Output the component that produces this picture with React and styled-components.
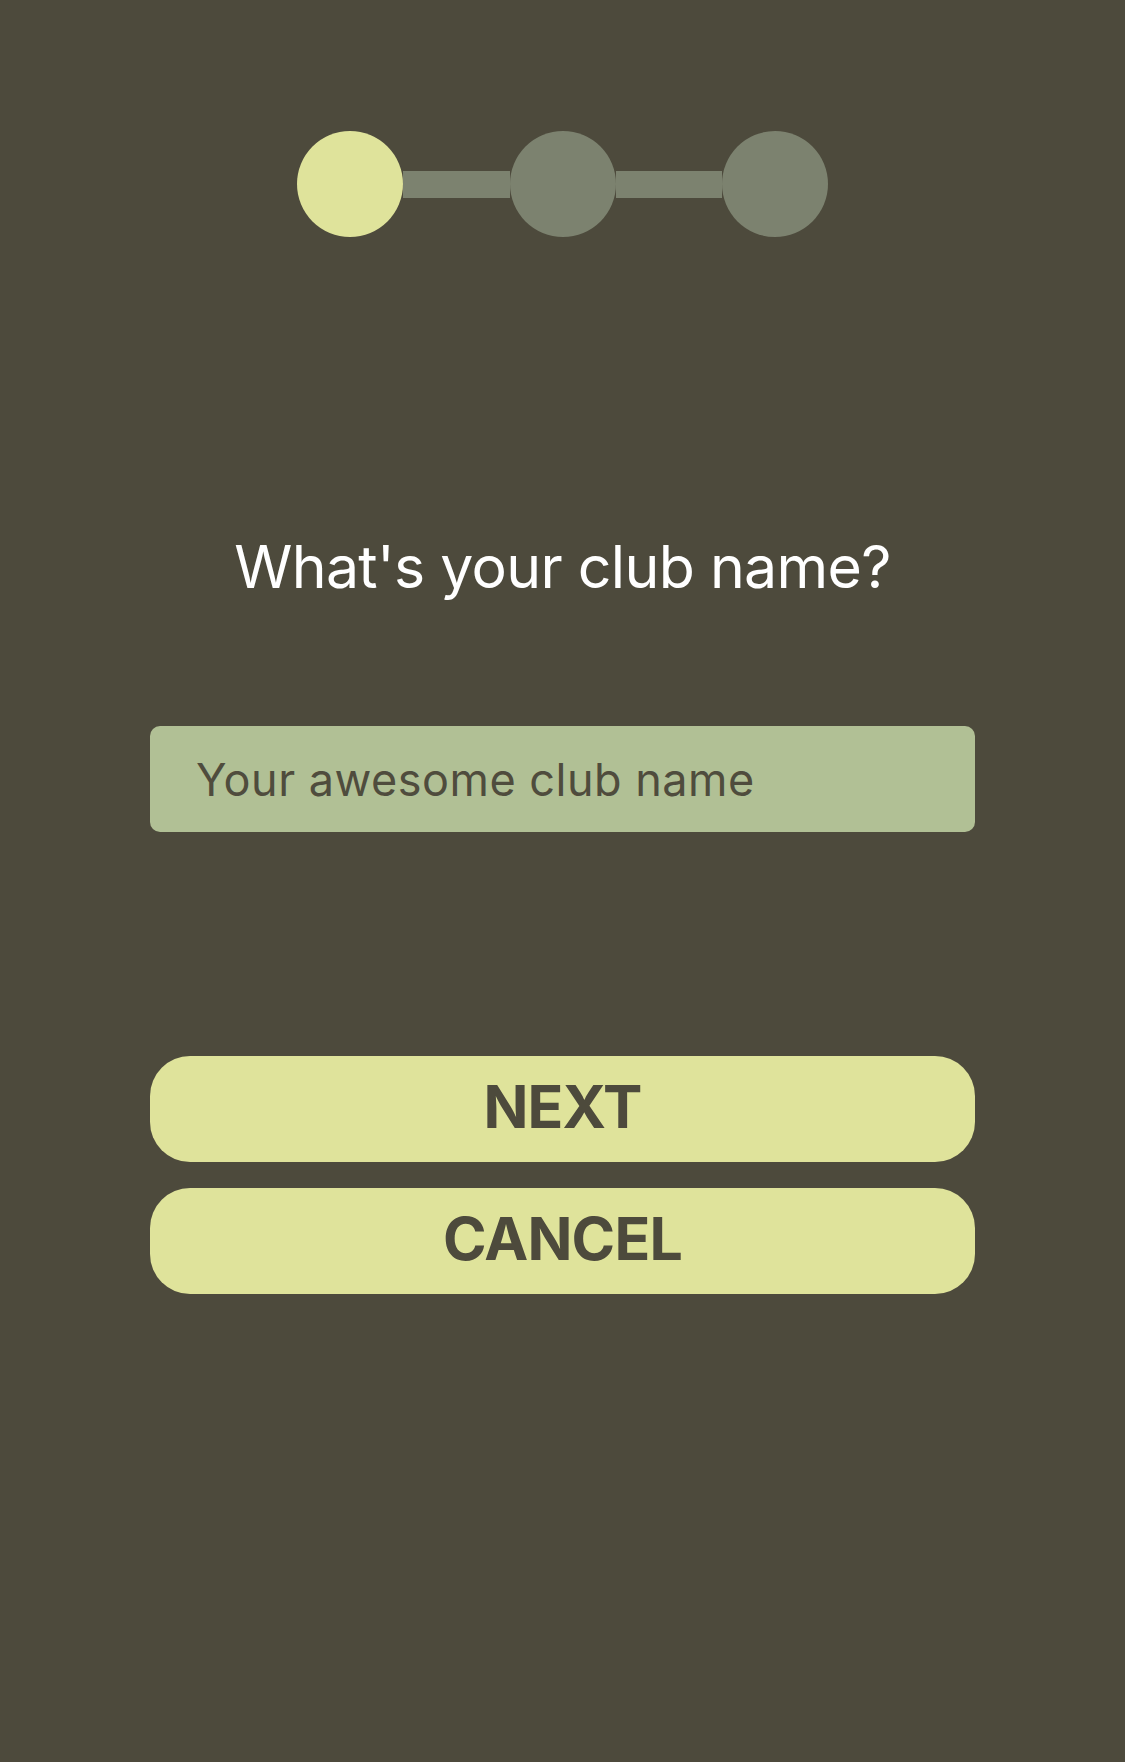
import { useState } from 'react'
import styled, { createGlobalStyle } from 'styled-components'

const GlobalStyle = createGlobalStyle`
  html, body {
    margin: 0;
    padding: 0;
    background: #4d4a3c;
  }
  body {
    font-family: Inter, "Noto Sans", "Liberation Sans", sans-serif;
    min-height: 100vh;
  }
`

const Page = styled.div`
  min-height: 100vh;
  display: flex;
  flex-direction: column;
  align-items: center;
  padding-top: 131px;
  box-sizing: border-box;
`

const Stepper = styled.div`
  display: flex;
  align-items: center;
  width: 531px;
`

const Dot = styled.div`
  width: 106px;
  height: 106px;
  flex: none;
  border-radius: 50%;
  background: ${p => (p.$active ? '#dfe39b' : '#7c826f')};
`

const Line = styled.div`
  flex: 1;
  height: 27px;
  background: #7c826f;
`

const Title = styled.h1`
  margin: 300px 0 0;
  font-size: 59px;
  line-height: 60px;
  font-weight: 400;
  letter-spacing: -0.7px;
  color: #ffffff;
  text-align: center;
`

const Form = styled.div`
  width: 825px;
  display: flex;
  flex-direction: column;
`

const NameInput = styled.input`
  margin-top: 129px;
  height: 106px;
  box-sizing: border-box;
  border: none;
  outline: none;
  border-radius: 10px;
  background: #b1c095;
  padding: 0 40px 0 46px;
  font-family: inherit;
  font-size: 45px;
  letter-spacing: 0.5px;
  color: #4d4a3c;

  &::placeholder {
    color: #4f4c3d;
    opacity: 1;
  }
`

const Actions = styled.div`
  margin-top: 224px;
  display: flex;
  flex-direction: column;
  gap: 26px;
`

const Button = styled.button`
  height: 106px;
  padding: 0 0 6px;
  border: none;
  border-radius: 40px;
  background: #dfe39b;
  color: #4d4a3c;
  font-family: inherit;
  font-size: 59px;
  font-weight: 700;
  letter-spacing: -0.8px;
  cursor: pointer;
`

export default function App() {
  const [name, setName] = useState('')
  const step = 0

  return (
    <>
      <GlobalStyle />
      <Page>
        <Stepper>
          <Dot $active={step === 0} />
          <Line />
          <Dot $active={step === 1} />
          <Line />
          <Dot $active={step === 2} />
        </Stepper>
        <Title>What's your club name?</Title>
        <Form>
          <NameInput
            value={name}
            onChange={e => setName(e.target.value)}
            placeholder="Your awesome club name"
          />
          <Actions>
            <Button>NEXT</Button>
            <Button>CANCEL</Button>
          </Actions>
        </Form>
      </Page>
    </>
  )
}
